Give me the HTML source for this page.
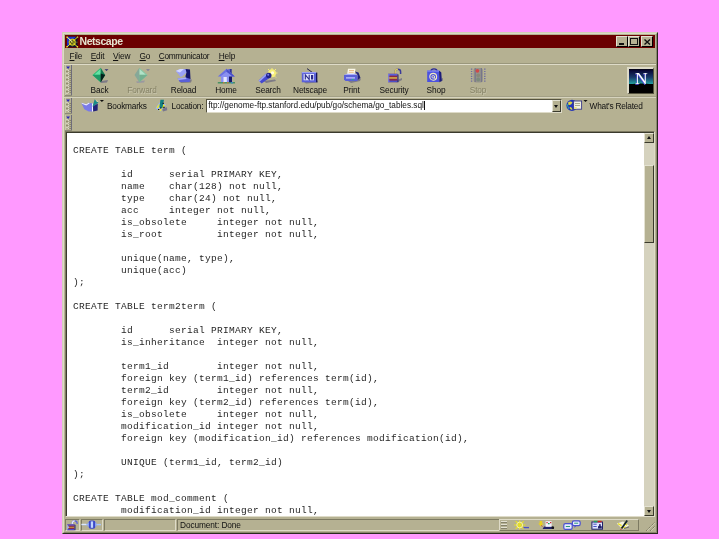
<!DOCTYPE html>
<html>
<head>
<meta charset="utf-8">
<title>Netscape</title>
<style>
html,body{margin:0;padding:0;}
body{will-change:transform;width:719px;height:539px;background:#ff99ff;position:relative;overflow:hidden;font-family:"Liberation Sans",sans-serif;}
.abs{position:absolute;}
#win{position:absolute;left:62px;top:32px;width:596px;height:502px;background:#b5b192;box-sizing:border-box;
  border-top:1px solid #d2cfb8;border-left:1px solid #d2cfb8;border-right:1px solid #2a2a20;border-bottom:1px solid #2a2a20;}
#win .inner{position:absolute;left:0;top:0;right:0;bottom:0;border-top:1px solid #dddac6;border-left:1px solid #dddac6;border-right:1px solid #8a876e;border-bottom:1px solid #8a876e;}
#title{left:65px;top:35px;width:590px;height:13px;background:#6b0000;}
#title .t{position:absolute;left:14.5px;top:-0.5px;font-size:10.5px;line-height:13px;font-weight:bold;color:#e6e4d0;letter-spacing:-0.45px;}
.tb{position:absolute;top:1px;height:10.5px;background:#b5b192;box-sizing:border-box;border-top:1px solid #e4e2d2;border-left:1px solid #e4e2d2;border-right:1px solid #000;border-bottom:1px solid #000;}
#menu{left:65px;top:49px;width:590px;height:15px;font-size:8.3px;letter-spacing:-0.15px;line-height:15px;color:#111;}
#menu span{position:absolute;top:0;}
#menu u{text-decoration:underline;}
.bar{position:absolute;left:65px;width:590px;box-sizing:border-box;border-top:1px solid #dedbc8;border-bottom:1px solid #7d7a62;}
.grip{position:absolute;left:1px;top:1px;bottom:1px;width:5px;border-left:1px solid #dedbc8;border-right:1px solid #7d7a62;box-sizing:border-box;
  background-image:repeating-linear-gradient(180deg,#d6d3c0 0 1px,#a19e82 1px 2px);}
.grip:before{content:"";position:absolute;left:0px;top:1px;border-left:2px solid transparent;border-right:2px solid transparent;border-top:3px solid #3535b0;}
.lbl{position:absolute;top:84.5px;letter-spacing:-0.15px;font-size:8.3px;line-height:11px;color:#111;text-align:center;width:50px;margin-left:-25px;}
.lbl.dis{color:#858266;text-shadow:0.6px 0.6px 0 #c9c6ae;}
.ico{position:absolute;}
#content{left:67px;top:133px;width:577px;height:383px;background:#fff;overflow:hidden;}
pre{margin:0;position:absolute;left:6px;top:12px;font-family:"Liberation Mono",monospace;font-size:9.5px;letter-spacing:0.3px;line-height:12px;color:#262626;tab-size:48px;-moz-tab-size:48px;white-space:pre;}
#sb{left:644px;top:133px;width:10px;height:383px;background:#d5d2be;}
.sbtn{position:absolute;left:0;width:10px;height:10px;box-sizing:border-box;background:#b5b192;border-top:1px solid #e4e2d2;border-left:1px solid #e4e2d2;border-right:1px solid #3a3a2c;border-bottom:1px solid #3a3a2c;}
.sunk{position:absolute;box-sizing:border-box;border-top:1px solid #7d7a62;border-left:1px solid #7d7a62;border-right:1px solid #dedbc8;border-bottom:1px solid #dedbc8;}
#status{font-size:8.3px;color:#111;letter-spacing:-0.2px}
.tx{font-size:8.3px;line-height:12px;color:#111;white-space:nowrap;letter-spacing:-0.2px}
</style>
</head>
<body>
<div id="win"><div class="inner"></div></div>

<!-- title bar -->
<div id="title" class="abs">
  <svg class="abs" style="left:1px;top:0.5px" width="13" height="12" viewBox="0 0 13 12">
    <rect x="1" y="0.8" width="10.5" height="10.4" fill="#10102c"/>
    <path d="M1 0.8 L10 0.8 L6.3 5 L4 8 L1 11.2 Z" fill="#1c34c8"/>
    <circle cx="6.3" cy="6.2" r="2.9" fill="#2a2410" stroke="#d8d020" stroke-width="1.2"/>
    <path d="M0.8 0.8 L11.8 11.2 M11.8 0.8 L0.8 11.2" stroke="#ece420" stroke-width="1" fill="none"/>
    <path d="M6.3 2 V10.5 M2 6.2 H11.6" stroke="#8a8a30" stroke-width="0.7" fill="none"/>
    <path d="M2.5 2.4 L6 5.6" stroke="#f4f4e0" stroke-width="0.8"/>
    <circle cx="1" cy="10.8" r="0.8" fill="#f0e830"/><circle cx="11.4" cy="10.8" r="0.8" fill="#f0e830"/><circle cx="11.6" cy="1.2" r="0.7" fill="#b8d040"/><circle cx="1.2" cy="1.4" r="0.8" fill="#f0e830"/>
  </svg>
  <div class="t">Netscape</div>
  <div class="tb" style="left:551px;width:11.5px;"><div class="abs" style="left:2px;top:5.5px;width:4.5px;height:2px;background:#111"></div></div>
  <div class="tb" style="left:562.5px;width:12px;"><div class="abs" style="left:1.5px;top:1px;width:7.5px;height:6.5px;border:1px solid #111;border-top-width:1.6px;box-sizing:border-box"></div></div>
  <div class="tb" style="left:576px;width:12px;">
    <svg class="abs" style="left:2px;top:1.5px" width="7" height="6" viewBox="0 0 7 6"><path d="M0.5 0.5 L6 5.5 M6 0.5 L0.5 5.5" stroke="#111" stroke-width="1.4"/></svg>
  </div>
</div>

<!-- menu bar -->
<div id="menu" class="abs">
  <span style="left:4.5px"><u>F</u>ile</span>
  <span style="left:25.7px"><u>E</u>dit</span>
  <span style="left:48px"><u>V</u>iew</span>
  <span style="left:74.5px"><u>G</u>o</span>
  <span style="left:93.7px;letter-spacing:-0.28px"><u>C</u>ommunicator</span>
  <span style="left:153.7px"><u>H</u>elp</span>
</div>

<!-- toolbar 1 -->
<svg width="0" height="0" style="position:absolute"><defs>
<pattern id="dots" x="1" y="4" width="5" height="4" patternUnits="userSpaceOnUse"><rect width="5" height="4" fill="#b5b192"/><rect x="0.5" y="0" width="1" height="1" fill="#f2f0e2"/><rect x="0.5" y="2" width="1" height="1" fill="#6a684e"/><rect x="2.5" y="1" width="1" height="1" fill="#ffffff"/><rect x="3.5" y="1" width="1" height="1" fill="#4e4c3a"/><rect x="2.5" y="3" width="1" height="1" fill="#ffffff"/><rect x="3.5" y="3" width="1" height="1" fill="#5e5c48"/></pattern>
</defs></svg>
<div class="abs" style="left:64px;top:64px;width:592px;height:1px;background:#dedbc8"></div>
<div class="abs" style="left:64px;top:63px;width:592px;height:1px;background:#9a977c"></div>
<div class="abs" style="left:64px;top:97px;width:592px;height:1px;background:#d6d3be"></div>
<div class="abs" style="left:64px;top:96px;width:592px;height:1px;background:#a3a085"></div>
<svg class="abs grp" style="left:65px;top:65px" width="7" height="31" viewBox="0 0 7 31"><rect x="0" y="0" width="7" height="31" fill="#b5b192"/><rect x="6" y="0" width="1" height="31" fill="#6e6c7a"/><rect x="0" y="30" width="7" height="1" fill="#8c8a78"/><rect x="0" y="0" width="1" height="30" fill="#c9c6b0"/><rect x="1" y="4" width="5" height="25" fill="url(#dots)"/><path d="M1.2 1.4 h3.8 l-1.9 2.6z" fill="#2828b8"/></svg>
<svg class="abs grp" style="left:65px;top:98px" width="7" height="16" viewBox="0 0 7 16"><rect x="0" y="0" width="7" height="16" fill="#b5b192"/><rect x="6" y="0" width="1" height="16" fill="#6e6c7a"/><rect x="0" y="15" width="7" height="1" fill="#8c8a78"/><rect x="0" y="0" width="1" height="15" fill="#c9c6b0"/><rect x="1" y="4" width="5" height="10" fill="url(#dots)"/><path d="M1.2 1.4 h3.8 l-1.9 2.6z" fill="#2828b8"/></svg>
<svg class="abs grp" style="left:65px;top:115px" width="7" height="16" viewBox="0 0 7 16"><rect x="0" y="0" width="7" height="16" fill="#b5b192"/><rect x="6" y="0" width="1" height="16" fill="#6e6c7a"/><rect x="0" y="15" width="7" height="1" fill="#8c8a78"/><rect x="0" y="0" width="1" height="15" fill="#c9c6b0"/><rect x="1" y="4" width="5" height="10" fill="url(#dots)"/><path d="M1.2 1.4 h3.8 l-1.9 2.6z" fill="#2828b8"/></svg>

<!-- nav buttons -->
<div id="nav">
  <!-- Back -->
  <svg class="ico" style="left:92px;top:67px" width="18" height="17" viewBox="0 0 18 17">
    <path d="M8 14.2 L16 13 L15 15.5 L9 16 Z" fill="#7d7a86"/>
    <path d="M0.5 8 L8.7 0.7 L8.7 15.3 Z" fill="#2cbc76"/>
    <path d="M2.5 7.5 L8.7 2 L8.7 7.5 Z" fill="#66e2a6"/>
    <path d="M0.5 8 L8.7 8 L8.7 15.3 Z" fill="#1f9a66"/>
    <path d="M8.7 0.7 L13.2 8 L8.7 15.3 Z" fill="#157a52"/>
    <path d="M8.7 6.5 L13.2 8 L8.7 15.3 Z" fill="#04201a"/>
    <path d="M12.5 2.2 h4 l-2 1.8z" fill="#2a2a70"/>
  </svg>
  <div class="lbl" style="left:99.5px">Back</div>
  <!-- Forward -->
  <svg class="ico" style="left:133px;top:67px" width="19" height="17" viewBox="0 0 19 17">
    <path d="M3 14.5 L12 13.5 L11 15.5 L4 16 Z" fill="#9a98a0"/>
    <path d="M14.5 8 L6.3 0.7 L6.3 15.3 Z" fill="#84c8a4"/>
    <path d="M12.5 7.5 L6.3 2 L6.3 7.5 Z" fill="#b2e2c8"/>
    <path d="M14.5 8 L6.3 8 L6.3 15.3 Z" fill="#74b090"/>
    <path d="M6.3 0.7 L1.5 8 L6.3 15.3 Z" fill="#86a898"/>
    <path d="M13 2.2 h4 l-2 1.8z" fill="#77779a"/>
  </svg>
  <div class="lbl dis" style="left:142px">Forward</div>
  <!-- Reload -->
  <svg class="ico" style="left:175px;top:68px" width="19" height="16" viewBox="0 0 19 16">
    <path d="M4 13 L17 11.5 L16 14.5 L6 15 Z" fill="#7d7a86"/>
    <path d="M0.8 3 L5 1 L13 1 L11.5 4.5 L7 8.5 L5.5 8.8 Z" fill="#9aa0f4"/>
    <path d="M0.8 3 L5 1 L9 1 L5 4.5 Z" fill="#d4d8ff"/>
    <path d="M10.5 1 L15 1.5 L15.5 11 L11 12.5 L10.5 8 L11.5 4.5 Z" fill="#14146a"/>
    <path d="M2.5 10.5 L11 9.5 L15.5 11 L14.5 14 L5 14 Z" fill="#5a60d8"/>
    <path d="M2.5 10.5 L11 9.5 L11.5 11 L3.5 12 Z" fill="#a8acf8"/>
  </svg>
  <div class="lbl" style="left:183.5px">Reload</div>
  <!-- Home -->
  <svg class="ico" style="left:217px;top:68px" width="19" height="16" viewBox="0 0 19 16">
    <rect x="11.3" y="1" width="3.2" height="5" fill="#5a60d8"/>
    <rect x="13.3" y="1" width="1.2" height="5" fill="#22227a"/>
    <path d="M0.8 8.5 L9.5 0.8 L17.8 8.5 L14.5 8.5 L9.5 4.2 L4 8.5 Z" fill="#6a70e4"/>
    <path d="M9.5 0.8 L17.8 8.5 L14.5 8.5 L9.5 4.2 Z" fill="#4a50c8"/>
    <path d="M4 8 L9.5 3.8 L15 8 V14.3 H4 Z" fill="#8a90f0"/>
    <rect x="6.5" y="9" width="3.3" height="5.3" fill="#e6e8ff"/>
    <rect x="12" y="8.5" width="3" height="5.8" fill="#1a1a6a"/>
    <rect x="0.8" y="14.2" width="17.2" height="1.2" fill="#2e8a5a"/>
    <rect x="6" y="14.2" width="1.5" height="1.2" fill="#e07a30"/><rect x="10" y="14.2" width="1.5" height="1.2" fill="#e07a30"/><rect x="14" y="14.2" width="2" height="1.2" fill="#3a8ad0"/>
  </svg>
  <div class="lbl" style="left:226px">Home</div>
  <!-- Search -->
  <svg class="ico" style="left:258px;top:68px" width="20" height="16" viewBox="0 0 20 16">
    <path d="M6 13 L17 11.5 L18 13 L8 15 Z" fill="#7d7a86"/>
    <circle cx="14" cy="5.2" r="4" fill="#f6ee78"/>
    <path d="M14 0 V2 M19.5 5 H17.5 M18 1 L16.5 2.5 M10 1 L11.3 2.4 M18 9.5 L16.7 8.2" stroke="#f6ee78" stroke-width="1"/>
    <circle cx="14.5" cy="4.8" r="1.6" fill="#fffde0"/>
    <path d="M0.6 12.6 L8.2 5.6 L12.2 9.6 L3.6 15.4 Z" fill="#4448d0"/>
    <path d="M0.6 12.6 L8.2 5.6 L9.4 6.8 L1.6 13.8 Z" fill="#9aa0f4"/>
    <circle cx="10.8" cy="7.5" r="2.7" fill="#22228a"/>
    <circle cx="10.2" cy="6.8" r="1" fill="#7a80e8"/>
  </svg>
  <div class="lbl" style="left:268px">Search</div>
  <!-- Netscape -->
  <svg class="ico" style="left:301px;top:68px" width="18" height="16" viewBox="0 0 18 16">
    <path d="M3 14 L17 12.5 L17 14.5 L5 15.5 Z" fill="#7d7a86"/>
    <path d="M6 0.6 L11 4.2" stroke="#22224a" stroke-width="1"/>
    <rect x="0.8" y="4" width="14.2" height="10.3" fill="#5a60d8"/>
    <rect x="0.8" y="4" width="14.2" height="1.2" fill="#9aa0f4"/>
    <rect x="15" y="4.6" width="1.3" height="9.7" fill="#14145a"/>
    <rect x="2.6" y="6" width="10.4" height="6.3" fill="#e0e4ff"/>
    <path d="M4.3 11.5 V6.8 L8.2 11.5 V6.8" stroke="#2a2a8a" stroke-width="1.1" fill="none"/>
    <rect x="10" y="7" width="2.2" height="4.5" fill="#2a2a8a"/>
  </svg>
  <div class="lbl" style="left:310px">Netscape</div>
  <!-- Print -->
  <svg class="ico" style="left:343px;top:68px" width="19" height="16" viewBox="0 0 19 16">
    <path d="M5 13 L18 10.5 L17 13 L8 15 Z" fill="#7d7a86"/>
    <path d="M5 0.8 H12.5 L11.5 7 H4 Z" fill="#fbf8e8"/>
    <path d="M6 2.5 H11 M5.7 4.3 H10.7" stroke="#e8b070" stroke-width="0.8"/>
    <path d="M12 3.5 L15.5 4.5 L17.5 10 L14.5 12 L14.5 7 Z" fill="#22227a"/>
    <path d="M1 7 L4 5.7 H12 L14.5 7 Z" fill="#a8acf8"/>
    <path d="M1 7 H14.5 V13 H2.5 L1 11.5 Z" fill="#5a60d8"/>
    <rect x="3" y="9.3" width="9" height="1.2" fill="#c8ccff"/>
    <rect x="9" y="11" width="1.6" height="1.2" fill="#20c070"/>
  </svg>
  <div class="lbl" style="left:351.5px">Print</div>
  <!-- Security -->
  <svg class="ico" style="left:387px;top:68px" width="17" height="16" viewBox="0 0 17 16">
    <path d="M8 13 L15 10 L15 12 L10 14.5 Z" fill="#7d7a86"/>
    <path d="M8.2 6.5 V3.8 a2.7 2.5 0 0 1 5.4 0 V6" stroke="#3a3a9a" stroke-width="1.5" fill="none"/>
    <path d="M8.2 6.5 V3.8 a2.7 2.5 0 0 1 2.7 -2.5" stroke="#d8c860" stroke-width="1.5" fill="none"/>
    <rect x="1.2" y="5.8" width="9.2" height="8.4" fill="#8a2848"/>
    <rect x="1.2" y="5.8" width="9.2" height="1.8" fill="#5a60d8"/>
    <rect x="1.2" y="9.2" width="9.2" height="1.5" fill="#d8b848"/>
    <rect x="1.2" y="12.6" width="9.2" height="1.6" fill="#4a50c8"/>
    <rect x="1.2" y="5.8" width="1.1" height="8.4" fill="#7a80e8"/>
    <rect x="10.4" y="6.4" width="1.1" height="7.8" fill="#22227a"/>
  </svg>
  <div class="lbl" style="left:394px">Security</div>
  <!-- Shop -->
  <svg class="ico" style="left:426px;top:67px" width="18" height="17" viewBox="0 0 18 17">
    <path d="M12 13 L17 11 L17 13.5 L13 15.5 Z" fill="#7d7a86"/>
    <path d="M5 4.5 V4 a3 2.2 0 0 1 6 0 V4.5" stroke="#2a2a9a" stroke-width="1.3" fill="none"/>
    <path d="M1.2 3.6 H13 L13.5 15 H1.2 Z" fill="#4c52e0"/>
    <path d="M13 3.6 L15.3 5.6 L15.8 14 L13.5 15 Z" fill="#1c1c7a"/>
    <path d="M1.2 3.6 H13 V4.6 H1.2 Z" fill="#8a90f4"/>
    <circle cx="7.2" cy="9.8" r="3.4" fill="none" stroke="#f0ecc0" stroke-width="1.1"/>
    <circle cx="7.2" cy="9.8" r="1.3" fill="none" stroke="#f0ecc0" stroke-width="0.9"/>
    <path d="M8.5 9 V11 a1 1 0 0 0 2 0" stroke="#f0ecc0" stroke-width="0.8" fill="none"/>
  </svg>
  <div class="lbl" style="left:436px">Shop</div>
  <!-- Stop -->
  <svg class="ico" style="left:470px;top:67px" width="17" height="17" viewBox="0 0 17 17">
    <rect x="3.5" y="1" width="9.5" height="14.5" rx="2.5" fill="#96948c"/>
    <path d="M1.6 1.5 V15 M14.8 1.5 V15" stroke="#6e6ca0" stroke-width="1.4" stroke-dasharray="1.2 1.2"/>
    <path d="M5.2 1.5 V15 M11.4 1.5 V15" stroke="#55558a" stroke-width="1.1" stroke-dasharray="1 1"/>
    <circle cx="7.4" cy="3.8" r="1.9" fill="#d04848"/>
    <circle cx="8.2" cy="8.3" r="1.9" fill="#8a8878"/>
    <circle cx="8.2" cy="12.5" r="1.9" fill="#7c8a7c"/>
  </svg>
  <div class="lbl dis" style="left:478px">Stop</div>
</div>

<!-- N logo -->
<div class="abs" style="left:627px;top:67px;width:27px;height:27px;box-sizing:border-box;border-top:2px solid #dedbc8;border-left:2px solid #dedbc8;border-right:1px solid #55533f;border-bottom:1px solid #55533f;">
  <svg width="24" height="24" viewBox="0 0 24 24" style="display:block">
    <defs><linearGradient id="ng" x1="0" y1="0" x2="0" y2="1"><stop offset="0" stop-color="#000010"/><stop offset="0.08" stop-color="#0a0a3a"/><stop offset="0.35" stop-color="#1a3a6a"/><stop offset="0.62" stop-color="#22a0a0"/><stop offset="0.64" stop-color="#000"/><stop offset="1" stop-color="#000"/></linearGradient></defs>
    <rect width="24" height="24" fill="url(#ng)"/>
    <path d="M0 15.5 Q12 13.5 24 15.5 V24 H0 Z" fill="#000"/>
    <text x="11.8" y="15.6" font-family="Liberation Serif,serif" font-size="17.5" fill="#4a4ad8" text-anchor="middle">N</text>
    <text x="12.4" y="15.2" font-family="Liberation Serif,serif" font-size="17.5" fill="#ffffff" text-anchor="middle">N</text>
  </svg>
</div>

<!-- location bar -->
<div id="loc">
  <svg class="ico" style="left:81px;top:99px" width="24" height="13" viewBox="0 0 24 13">
    <path d="M0.3 3.7 L3.3 10.3 L7.8 12.4 L11.8 12.4 L11.8 4.5 L7.8 3.7 L5.3 5.3 Z" fill="#7a7ae8"/>
    <path d="M0.3 3.7 L5.3 5.3 L7.8 3.7 L8.8 4.2 L5.3 6.5 L1 4.8Z" fill="#f0f0ff"/>
    <path d="M11 4.5 L12 4.5 L12 12.4 L11 12.4Z" fill="#f4f4ff"/>
    <path d="M11.6 7.2 L13.7 0.3 L15.5 2.6 L17.6 3.2 L12 8Z" fill="#1a8a8a"/>
    <path d="M15 0.8 L16 2.8 L17.6 3.2 Z" fill="#f0eab0"/>
    <path d="M12 7.6 L16.8 4.6 L16.6 11.4 L12.2 12.5 Z" fill="#22227a"/>
    <path d="M18.8 1 h4.2 l-2.1 2z" fill="#111"/>
  </svg>
  <div class="abs tx" style="left:107px;top:100px;">Bookmarks</div>
  <svg class="ico" style="left:155px;top:99px" width="13" height="13" viewBox="0 0 13 13">
    <path d="M7 9.5 L12 8.3 L12.2 11.3 L8 12.6Z" fill="#77758e"/>
    <path d="M0.4 9.6 L4.4 3.4 L11.2 5.4 L5.6 12.4 Z" fill="#9cb4f0"/>
    <path d="M1.6 8.8 L4 5.2 L5 5.8 L2.8 9.4 Z M8.4 5.4 L10 6 L7.4 9.8 L6.2 9Z M3.6 10.6 L5.6 9.4 L6.8 11 L5.2 12Z" fill="#f6f010"/>
    <path d="M5.4 0.8 L9 0.8 L7.4 9.2 L4.4 8.6 Z" fill="#138080"/>
    <path d="M3 10 h1.3 v1.1 h-1.3z M8.3 7.8 h1.3 v1.2 h-1.3z M7.6 3.8 h1.2 v1.2 h-1.2z M5 8.4 h1.3 v1.2 h-1.3z" fill="#0a0a1a"/>
  </svg>
  <div class="abs tx" style="left:171.5px;top:100px;">Location:</div>
  <div class="sunk" style="left:206px;top:99px;width:356px;height:14px;background:#fff;border-top-color:#55533f;border-left-color:#55533f;">
    <div class="abs" style="left:1.3px;top:0px;font-size:8.26px;line-height:12px;color:#111;white-space:nowrap" id="url">ftp://genome-ftp.stanford.edu/pub/go/schema/go_tables.sql<span style="display:inline-block;width:1px;height:9px;background:#111;vertical-align:-1.5px;margin-left:0px"></span></div>
    <div class="abs" style="right:0;top:0;width:9px;height:12px;background:#b5b192;box-sizing:border-box;border-top:1px solid #e4e2d2;border-left:1px solid #e4e2d2;border-right:1px solid #3a3a2c;border-bottom:1px solid #3a3a2c;">
      <div class="abs" style="left:1px;top:4px;border-left:2.5px solid transparent;border-right:2.5px solid transparent;border-top:3px solid #111"></div>
    </div>
  </div>
  <svg class="ico" style="left:566px;top:99px" width="22" height="13" viewBox="0 0 22 13">
    <circle cx="6" cy="6.4" r="5.6" fill="#2434b8"/>
    <path d="M2 3.5 Q4.5 1.3 6.5 3.5 Q5 6.5 2.5 6 Z M3.5 8 Q6 7.5 6.5 10.5 Q4.5 11.8 3.5 8Z" fill="#d8d840"/>
    <path d="M1 5 Q2 8 3 10" stroke="#2ab0a0" stroke-width="1" fill="none"/>
    <rect x="7.6" y="2" width="8" height="8.2" fill="#f0f0e0" stroke="#3a3a8a" stroke-width="0.9"/>
    <path d="M9 4.5 H14 M9 6.5 H14" stroke="#8a8a6a" stroke-width="0.7"/>
    <path d="M8.2 8 h2.5 v2 h-2.5z" fill="#e8e080"/>
    <path d="M17.4 1 h4.2 l-2.1 2z" fill="#111"/>
  </svg>
  <div class="abs tx" style="left:589.5px;top:100px;">What's Related</div>
</div>

<!-- content frame -->
<div class="abs" style="left:65px;top:131px;width:590px;height:386px;box-sizing:border-box;border-top:1px solid #7d7a62;border-left:1px solid #7d7a62;border-right:1px solid #dedbc8;border-bottom:1px solid #dedbc8;"></div>
<div class="abs" style="left:66px;top:132px;width:588px;height:384px;box-sizing:border-box;border-top:1px solid #3a3a2c;border-left:1px solid #3a3a2c;border-right:none;border-bottom:none;"></div>
<div id="content" class="abs">
<pre>CREATE TABLE term (

	id	serial PRIMARY KEY,
	name	char(128) not null,
	type	char(24) not null,
	acc	integer not null,
	is_obsolete	integer not null,
	is_root		integer not null,

	unique(name, type),
	unique(acc)
);

CREATE TABLE term2term (

	id	serial PRIMARY KEY,
	is_inheritance	integer not null,

	term1_id	integer not null,
	foreign key (term1_id) references term(id),
	term2_id	integer not null,
	foreign key (term2_id) references term(id),
	is_obsolete	integer not null,
	modification_id	integer not null,
	foreign key (modification_id) references modification(id),

	UNIQUE (term1_id, term2_id)
);

CREATE TABLE mod_comment (
	modification_id	integer not null,
</pre>
</div>

<!-- scrollbar -->
<div id="sb" class="abs">
  <div class="sbtn" style="top:0"><div class="abs" style="left:1.5px;top:2px;border-left:2.5px solid transparent;border-right:2.5px solid transparent;border-bottom:3px solid #111"></div></div>
  <div class="sbtn" style="top:32px;height:78px;"></div>
  <div class="sbtn" style="bottom:0"><div class="abs" style="left:1.7px;top:3px;border-left:2.5px solid transparent;border-right:2.5px solid transparent;border-top:3px solid #111"></div></div>
</div>

<!-- status bar -->
<div id="status">
  <div class="sunk" style="left:65px;top:519px;width:14.5px;height:12px;"></div>
  <svg class="ico" style="left:66px;top:519.5px" width="13" height="11" viewBox="0 0 13 11">
    <path d="M6.3 4.5 V3 a2.4 2.2 0 0 1 4.8 0 V4" stroke="#5a60d8" stroke-width="1.2" fill="none"/>
    <path d="M6.3 4.5 V3 a2.4 2.2 0 0 1 2.4 -2.2" stroke="#e8e8ff" stroke-width="1.2" fill="none"/>
    <rect x="1.2" y="4.3" width="7.3" height="5.9" fill="#8a2848"/>
    <rect x="1.2" y="4.3" width="7.3" height="1.3" fill="#5a60d8"/>
    <rect x="1.2" y="6.8" width="7.3" height="1" fill="#c8a040"/>
    <rect x="1.2" y="9" width="7.3" height="1.2" fill="#4a50c8"/>
    <path d="M1.2 4.3 L3 7.2 L1.2 10.2Z" fill="#a8c0f8"/>
    <rect x="8.5" y="4.8" width="1" height="5.4" fill="#22227a"/>
  </svg>
  <div class="sunk" style="left:80.5px;top:519px;width:22.5px;height:12px;"></div>
  <svg class="ico" style="left:81px;top:520px" width="21" height="10" viewBox="0 0 21 10">
    <path d="M0.5 4.6 H20" stroke="#a8c4f8" stroke-width="1.4"/>
    <path d="M0.5 4.3 H5" stroke="#f0f4ff" stroke-width="0.9"/>
    <rect x="7.6" y="0.4" width="6.8" height="8.4" rx="2.2" fill="#3a48c8"/>
    <rect x="9.8" y="1.4" width="2.3" height="6.4" fill="#c0d4ff"/>
    <rect x="6.6" y="2.5" width="1.4" height="4.2" fill="#8aa0f0"/>
    <rect x="14" y="2.5" width="1.4" height="4.2" fill="#8aa0f0"/>
  </svg>
  <div class="sunk" style="left:104px;top:519px;width:72px;height:12px;"></div>
  <div class="sunk" style="left:177px;top:519px;width:322px;height:12px;border-right:none"></div>
  <div class="abs" style="left:180px;top:518.6px;line-height:12px;white-space:nowrap;letter-spacing:-0.1px">Document: Done</div>
  <!-- component bar -->
  <div class="abs" style="left:499px;top:519px;width:140px;height:12px;box-sizing:border-box;border-top:1px solid #dedbc8;border-left:1px solid #dedbc8;border-right:1px solid #7d7a62;border-bottom:1px solid #7d7a62;"></div>
  <div class="abs" style="left:501px;top:521px;width:6px;height:9px;background-image:repeating-linear-gradient(180deg,#e2e0d0 0 1px,#86836a 1px 2px,#b5b192 2px 3px);"></div>
  <svg class="ico" style="left:513px;top:520px" width="17" height="10" viewBox="0 0 17 10">
    <path d="M1 5 H12.4 M6.7 0.4 V9.6 M2.6 1.2 L10.8 8.8 M10.8 1.2 L2.6 8.8" stroke="#e8e020" stroke-width="1.1"/>
    <circle cx="6.7" cy="5" r="2.9" fill="none" stroke="#f8f4a0" stroke-width="1"/>
    
    <path d="M10.5 7.6 h5.5" stroke="#4a50c8" stroke-width="1.3"/>
  </svg>
  <svg class="ico" style="left:538px;top:520px" width="17" height="10" viewBox="0 0 17 10">
    <path d="M1.6 1 h2.6 v2.4 h1.4 l-2.7 3.2 l-2.7 -3.2 h1.4z" fill="#e8d020"/>
    <path d="M3.2 5.5 l1.3 1" stroke="#c03030" stroke-width="0.8"/>
    <path d="M4.6 9 L6 6.6 H15.5 L16 9 Z" fill="#22226a"/>
    <path d="M7.6 1.2 h6 v5.6 h-6z" fill="#f0f2ff"/>
    <path d="M8.4 2 h1.3 v1.3 h-1.3z M12 2 h1.3 v1.3 h-1.3z" fill="#d03030"/>
    <path d="M10 3 h1.6 v1.3 h-1.6z" fill="#20a060"/>
    <circle cx="14.8" cy="7.8" r="1.3" fill="#111"/>
  </svg>
  <svg class="ico" style="left:563px;top:520px" width="18" height="10" viewBox="0 0 18 10">
    <rect x="0.8" y="3.6" width="8.4" height="5.8" rx="1.6" fill="#e8ecff" stroke="#4a50d0" stroke-width="1.2"/>
    <path d="M8.5 3.5 l1.5 -1.5" stroke="#4a50d0" stroke-width="1"/>
    <rect x="9.4" y="0.8" width="7.8" height="4.8" rx="1.6" fill="#e8ecff" stroke="#4a50d0" stroke-width="1.2"/>
    <path d="M11.5 5.6 v2.4 l2 -2.4z" fill="#4a50d0"/>
    <path d="M2.8 6.5 h4.2 M11.2 3.2 h4" stroke="#2a9a7a" stroke-width="1"/>
  </svg>
  <svg class="ico" style="left:591px;top:520px" width="13" height="10" viewBox="0 0 13 10">
    <rect x="0.9" y="2" width="10.6" height="7.2" fill="#dfe4ff" stroke="#22226a" stroke-width="1"/>
    <rect x="3" y="0.8" width="3.6" height="1.5" fill="#20a060"/>
    <rect x="6.6" y="0.8" width="4" height="1.5" fill="#d02020"/>
    <path d="M2.3 4.2 h3.4 M2.3 6.5 h3.4" stroke="#4a50c8" stroke-width="1"/>
    <path d="M7 8.6 V6.5 l1.2 -1 V4 h1.4 v1.5 l1.2 1 v2.1z" fill="#22226a"/>
  </svg>
  <svg class="ico" style="left:616px;top:520px" width="15" height="10" viewBox="0 0 15 10">
    <path d="M0.8 3.4 L7 1.4 L13 5.6 L6.6 9.2 Z" fill="#f4f4e6"/>
    <path d="M2 3.6 l3.6 2 M4.6 7.6 l5 -0.4 M8 3 l3 2.2" stroke="#e8e020" stroke-width="1.5"/>
    <path d="M11.2 0.6 L5.6 8.6" stroke="#10202a" stroke-width="1.7"/>
    <path d="M5.6 8.6 l-0.9 1.2" stroke="#c03030" stroke-width="1"/>
    <path d="M8 8.5 l5 -1.5" stroke="#55556a" stroke-width="0.8"/>
  </svg>
  <!-- resize grip -->
  <svg class="ico" style="left:645px;top:520.5px" width="10" height="10" viewBox="0 0 10 10">
    <path d="M1 10 L10 1 M5 10 L10 5" stroke="#807d64" stroke-width="1" stroke-dasharray="1.4 0.7"/>
    <path d="M2 10 L10 2 M6 10 L10 6" stroke="#dedbc8" stroke-width="0.6"/>
  </svg>
</div>
</body>
</html>
